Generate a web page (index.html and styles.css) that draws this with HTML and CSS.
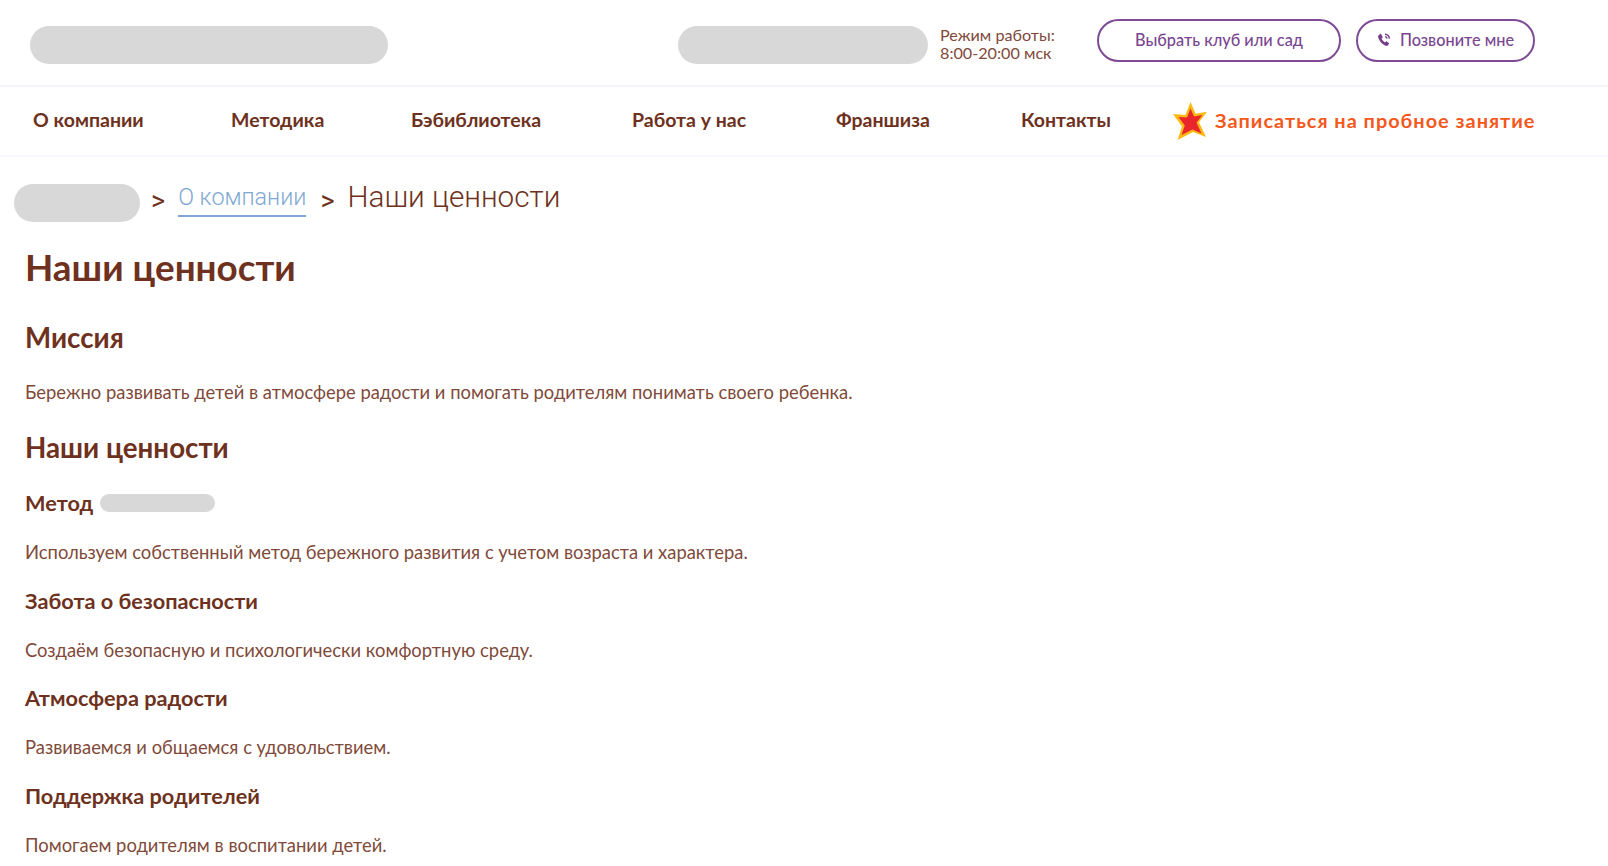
FILE: index.html
```html
<!DOCTYPE html>
<html lang="ru">
<head>
<meta charset="utf-8">
<title>Наши ценности</title>
<link rel="stylesheet" href="styles.css">
</head>
<body>
<header class="top">
  <div class="mask mask-logo"></div>
  <div class="mask mask-phone"></div>
  <div class="hours">Режим работы:<br>8:00-20:00 мск</div>
  <a class="btn btn-club" href="#">Выбрать клуб или сад</a>
  <a class="btn btn-call" href="#">
    <svg class="phone" viewBox="0 0 14 14" aria-hidden="true"><path d="M3.2 1 1.6 2.2C.9 2.8 1 4 1.6 5.600c1.200 3 3.600 5.800 6.400 7 1.400.6 2.400.4 3-.3l1-1.500c.2-.4.1-.7-.2-.9L9.800 8.400c-.3-.2-.7-.2-.9.100l-.8 1c-1.200-.5-3-2.400-3.600-3.900l1-.8c.3-.2.3-.6.200-.9L4.200 1.200C3.900.8 3.500.8 3.200 1Z"/><path class="ring" d="M8 1.200c2.500.2 4.200 2 4.500 4.500M8 3.600c1.200.1 2 1 2.200 2.100"/></svg>
    Позвоните мне
  </a>
</header>
<nav class="menu">
  <a class="item" href="#">О компании</a>
  <a class="item" href="#">Методика</a>
  <a class="item" href="#">Бэбиблиотека</a>
  <a class="item" href="#">Работа у нас</a>
  <a class="item" href="#">Франшиза</a>
  <a class="item" href="#">Контакты</a>
  <a class="cta" href="#">
    <svg class="star" viewBox="0 0 34 38" aria-hidden="true"><path fill="#fdb813" d="M17.500 0 22.500 11.800 34 9.800 26 20.200 33 35 20 30 4.500 38 9 24.500 0 12 12.500 13Z"/><path fill="#e8262c" d="M17.500 6.500 21 14.500 29.500 13 23.500 20.500 28.500 31.500 19.500 27.500 8.500 33 11.800 23.500 5.500 15 14 15.500Z"/></svg>
    <span class="cta-text">Записаться на пробное занятие</span>
  </a>
</nav>
<div class="crumbs">
  <div class="mask mask-home"></div>
  <span class="sep">&gt;</span>
  <a class="crumb-link" href="#">О компании</a>
  <span class="sep sep-last">&gt;</span>
  <span class="crumb-now">Наши ценности</span>
</div>
<main class="content">
  <h1>Наши ценности</h1>
  <h2>Миссия</h2>
  <p>Бережно развивать детей в атмосфере радости и помогать родителям понимать своего ребенка.</p>
  <h2 class="h2b">Наши ценности</h2>
  <h3>Метод <span class="mask mask-inline"></span></h3>
  <p>Используем собственный метод бережного развития с учетом возраста и характера.</p>
  <h3>Забота о безопасности</h3>
  <p>Создаём безопасную и психологически комфортную среду.</p>
  <h3>Атмосфера радости</h3>
  <p>Развиваемся и общаемся с удовольствием.</p>
  <h3>Поддержка родителей</h3>
  <p>Помогаем родителям в воспитании детей.</p>
</main>
</body>
</html>
```
FILE: styles.css
```css
* { box-sizing: border-box; }
html, body { margin: 0; height: 100%; overflow: hidden; }
body { background: #fff; color: #6e3120; font-family: Lato, "Open Sans", sans-serif; }
a { text-decoration: none; color: inherit; }
.mask { display: block; background: #d8d8d8; border-radius: 19px; }
.top { display: flex; align-items: flex-start; height: 87px; padding: 19px 0 0 30px; border-bottom: 2px solid #f5f4fa; }
.mask-logo { width: 358px; height: 38px; margin-top: 7px; }
.mask-phone { width: 250px; height: 38px; margin: 7px 0 0 290px; }
.hours { margin: 7px 0 0 12px; width: 157px; font-size: 16.200px; line-height: 18px; color: #7f4a3a; }
.btn { display: flex; align-items: center; justify-content: center; height: 43px; padding-bottom: 2px; border: 2px solid #7f4a96; border-radius: 22px; font-size: 16.300px; font-weight: 500; color: #7a4690; }
.btn-club { width: 244px; }
.btn-call { width: 179px; margin-left: 15px; }
.phone { width: 14px; height: 14px; margin-right: 9px; fill: #74408c; }
.ring { fill: none; stroke: #74408c; stroke-width: 1.400; }
.menu { display: grid; grid-template-columns: 198px 180px 221px 204px 185px 152px auto; align-items: center; height: 70px; padding-left: 33px; border-bottom: 2px solid #f8f7fb; font-size: 19.500px; font-weight: 700; }
.item { padding-bottom: 4px; white-space: nowrap; }
.cta { display: flex; align-items: center; color: #f4581c; font-size: 19.900px; font-weight: 700; letter-spacing: 1px; white-space: nowrap; }
.cta-text { padding-bottom: 2px; }
.star { width: 34px; height: 38px; margin-right: 8px; }
.crumbs { display: flex; align-items: flex-start; padding: 27px 0 0 14px; font-weight: 300; font-family: Roboto, sans-serif; }
.mask-home { width: 126px; height: 38px; }
.sep { margin: 1px 13px 0 11px; font-size: 27px; line-height: 32px; font-weight: 400; }
.sep-last { margin-left: 14px; }
.crumb-link { color: #7fa9d3; border-bottom: 2px solid #7fa9d3; height: 33px; font-size: 23.300px; line-height: 27px; }
.crumb-now { line-height: 25px; font-size: 29.700px; }
.content { padding: 23px 25px 0; }
h1 { margin: 0 0 32px; font-size: 36.800px; line-height: 44px; font-weight: 700; }
h2 { margin: 0 0 25px; font-size: 27.700px; line-height: 34px; font-weight: 700; }
.h2b { margin: 27px 0 25px; }
h3 { display: flex; align-items: center; gap: 7px; margin: 0 0 24px; font-size: 21.700px; line-height: 26px; font-weight: 700; }
p { margin: 0 0 23.700px; font-size: 18.400px; line-height: 24px; color: #7f4a3a; }
.mask-inline { width: 115px; height: 18px; border-radius: 9px; }
```
